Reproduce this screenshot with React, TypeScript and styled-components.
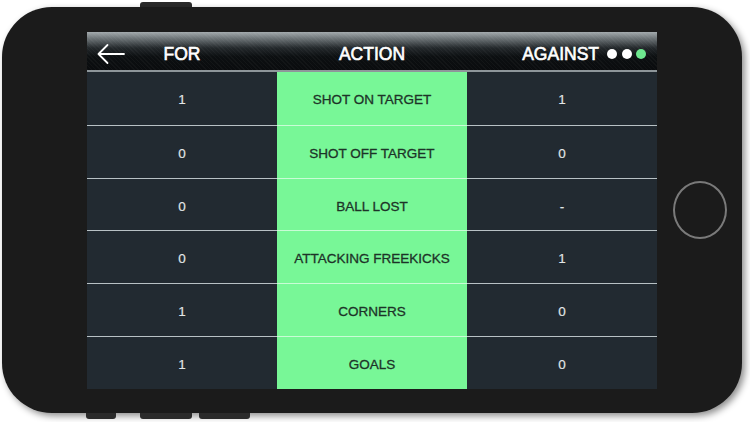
import React from 'react'
import styled, { createGlobalStyle } from 'styled-components'

const GlobalStyle = createGlobalStyle`
  html, body {
    margin: 0;
    padding: 0;
    background: #ffffff;
  }
`

const Stage = styled.div`
  width: 750px;
  height: 422px;
  overflow: hidden;
  display: flex;
  flex-direction: column;
  padding-left: 2px;
  box-sizing: border-box;
  font-family: 'Liberation Sans', Arial, sans-serif;
`

const ButtonRow = styled.div<{ $height: number; $align: 'flex-start' | 'flex-end' }>`
  height: ${(p) => p.$height}px;
  display: flex;
  align-items: ${(p) => p.$align};
`

const SideButton = styled.div<{ $left: number; $width: number; $height: number; $top?: boolean }>`
  margin-left: ${(p) => p.$left}px;
  width: ${(p) => p.$width}px;
  height: ${(p) => p.$height}px;
  background: #2b2b2b;
  border-radius: ${(p) => (p.$top ? '3px 3px 0 0' : '0 0 3px 3px')};
`

const Phone = styled.div`
  width: 740px;
  height: 406px;
  border-radius: 50px;
  background: #1b1b1b;
  box-shadow: 3px 3px 7px rgba(0, 0, 0, 0.45);
  display: flex;
  align-items: center;
  padding-left: 85px;
  box-sizing: border-box;
`

const Screen = styled.div`
  width: 570px;
  height: 357px;
  margin-top: 1px;
  display: flex;
  flex-direction: column;
  background: #222a31;
`

const HomeSlot = styled.div`
  flex: 1;
  display: flex;
  justify-content: center;
  align-items: center;
`

const HomeButton = styled.div`
  width: 50px;
  height: 54px;
  border-radius: 50%;
  border: 2px solid #7a7a7a;
`

const Header = styled.div`
  position: relative;
  height: 38px;
  display: grid;
  grid-template-columns: repeat(3, 190px);
  align-items: center;
  border-bottom: 2px solid #8e969a;
  background:
    repeating-linear-gradient(45deg, rgba(255, 255, 255, 0.03) 0 1px, transparent 1px 3px),
    linear-gradient(#a3aaad 0%, #6a7174 18%, #23282b 42%, #0c0f11 65%, #0a0c0e 100%);
`

const HeaderLabel = styled.div<{ $right?: boolean }>`
  color: #ffffff;
  font-size: 17.5px;
  font-weight: 400;
  -webkit-text-stroke: 0.6px #ffffff;
  display: flex;
  justify-content: ${(p) => (p.$right ? 'flex-end' : 'center')};
  align-items: center;
  padding-right: ${(p) => (p.$right ? '11px' : '0')};
  padding-top: 6px;
  gap: 8px;
`

const BackArrow = styled.svg`
  position: absolute;
  left: 10px;
  top: 10px;
`

const Dots = styled.div`
  display: flex;
  gap: 4.5px;
`

const Dot = styled.span<{ $on?: boolean }>`
  width: 10px;
  height: 10px;
  border-radius: 50%;
  background: ${(p) => (p.$on ? '#6ee88f' : '#ffffff')};
  -webkit-text-stroke: 0;
`

const Body = styled.div`
  flex: 1;
  display: grid;
  grid-template-rows: repeat(6, 1fr);
`

const Row = styled.div`
  display: grid;
  grid-template-columns: repeat(3, 190px);
`

const Cell = styled.div<{ $action?: boolean; $first?: boolean }>`
  display: flex;
  align-items: center;
  justify-content: center;
  padding-top: 3px;
  font-size: 13.5px;
  background: ${(p) => (p.$action ? '#78f797' : '#222a31')};
  color: ${(p) => (p.$action ? '#1d3328' : '#e2e6e8')};
  -webkit-text-stroke: ${(p) => (p.$action ? '0.3px #1d3328' : '0.15px #e2e6e8')};
  border-top: ${(p) =>
    p.$first ? 'none' : p.$action ? '1.5px solid #c9fcd6' : '1.5px solid #b8c1c5'};
`

const rows = [
  { forValue: '1', action: 'SHOT ON TARGET', against: '1' },
  { forValue: '0', action: 'SHOT OFF TARGET', against: '0' },
  { forValue: '0', action: 'BALL LOST', against: '-' },
  { forValue: '0', action: 'ATTACKING FREEKICKS', against: '1' },
  { forValue: '1', action: 'CORNERS', against: '0' },
  { forValue: '1', action: 'GOALS', against: '0' },
]

const App = () => (
  <>
    <GlobalStyle />
    <Stage>
      <ButtonRow $height={7} $align='flex-end'>
        <SideButton $left={138} $width={52} $height={5} $top />
      </ButtonRow>
      <Phone>
        <Screen>
          <Header>
            <BackArrow width='30' height='24' viewBox='0 0 30 24'>
              <path
                d='M1.5 12 H27 M1.5 12 L10.5 3 M1.5 12 L10.5 21'
                stroke='#ffffff'
                strokeWidth='1.8'
                fill='none'
                strokeLinecap='round'
              />
            </BackArrow>
            <HeaderLabel>FOR</HeaderLabel>
            <HeaderLabel>ACTION</HeaderLabel>
            <HeaderLabel $right>
              AGAINST
              <Dots>
                <Dot />
                <Dot />
                <Dot $on />
              </Dots>
            </HeaderLabel>
          </Header>
          <Body>
            {rows.map((row, index) => (
              <Row key={index}>
                <Cell $first={index === 0}>{row.forValue}</Cell>
                <Cell $first={index === 0} $action>
                  {row.action}
                </Cell>
                <Cell $first={index === 0}>{row.against}</Cell>
              </Row>
            ))}
          </Body>
        </Screen>
        <HomeSlot>
          <HomeButton />
        </HomeSlot>
      </Phone>
      <ButtonRow $height={6} $align='flex-start'>
        <SideButton $left={84} $width={30} $height={6} />
        <SideButton $left={24} $width={52} $height={6} />
        <SideButton $left={7} $width={51} $height={6} />
      </ButtonRow>
    </Stage>
  </>
)

export default App
